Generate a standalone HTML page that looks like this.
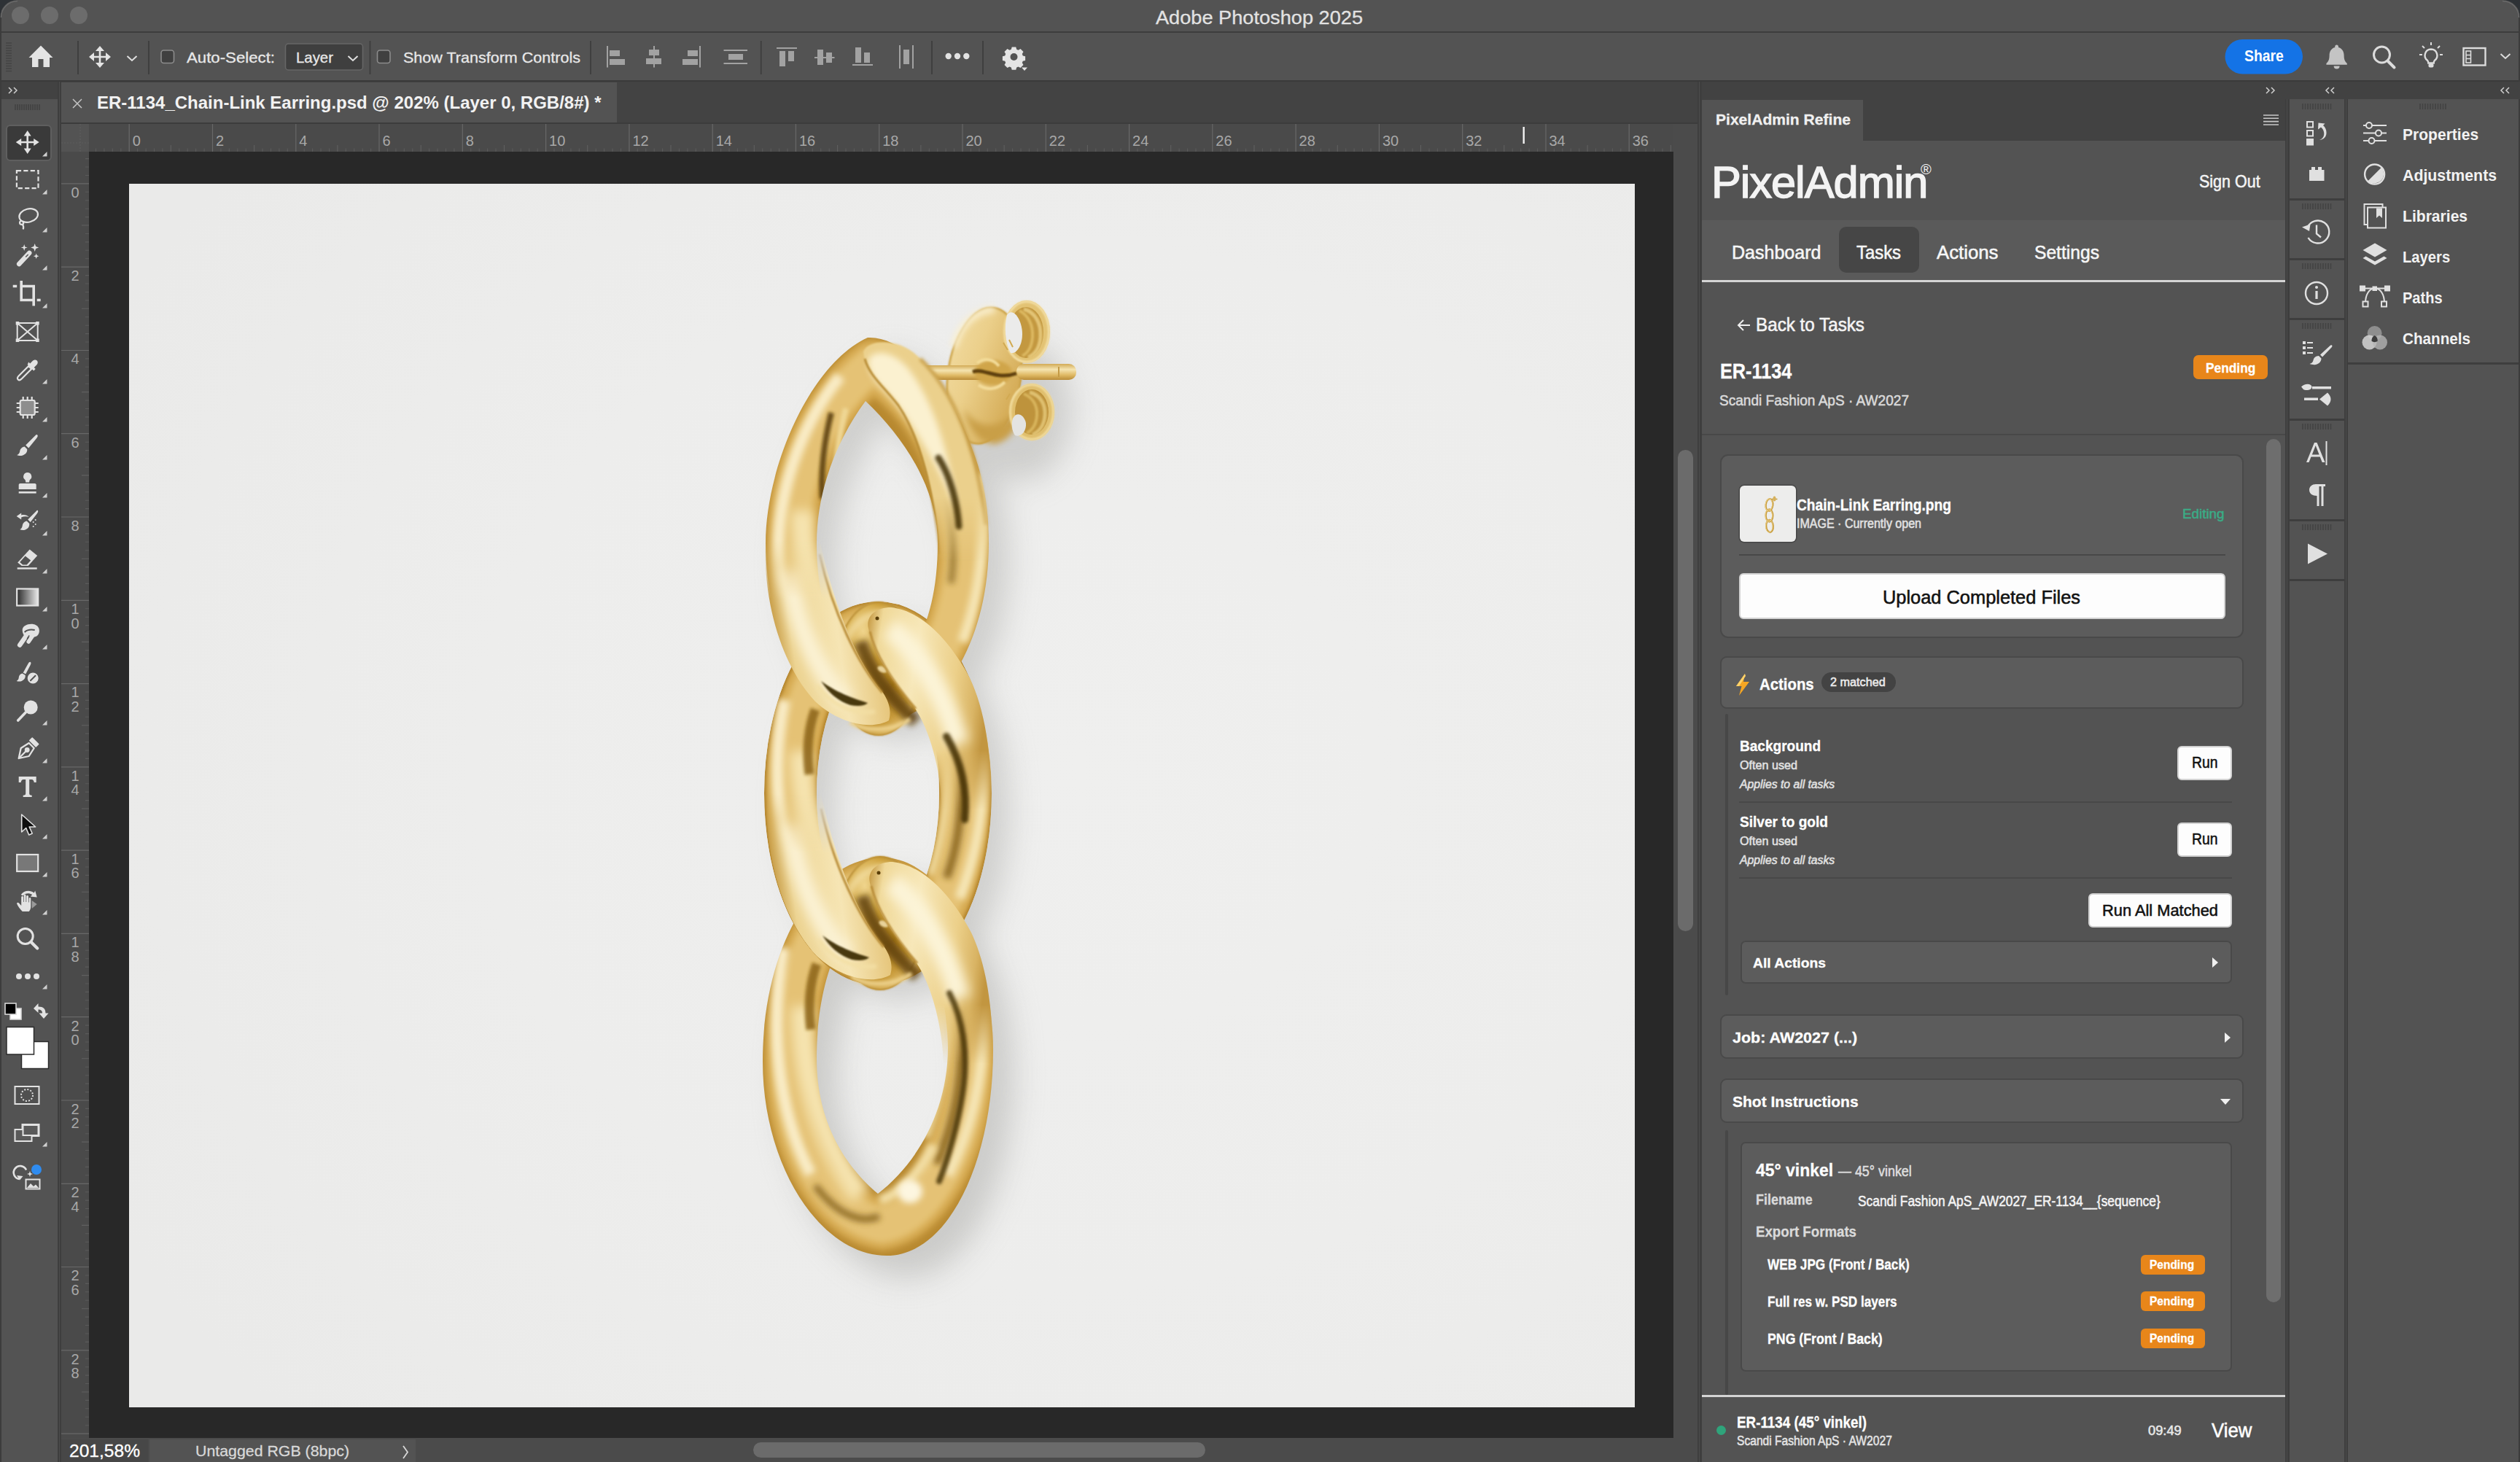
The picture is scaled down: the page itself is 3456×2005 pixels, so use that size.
<!DOCTYPE html>
<html><head><meta charset="utf-8"><title>Adobe Photoshop 2025</title>
<style>
*{box-sizing:border-box;margin:0;padding:0}
html,body{width:3456px;height:2005px;overflow:hidden;background:#535353;font-family:"Liberation Sans",sans-serif;color:#e6e6e6}
.a{position:absolute}
.t{position:absolute;white-space:nowrap;transform-origin:0 50%;line-height:1.2}
.b{font-weight:bold}
.i{font-style:italic}
svg{position:absolute;overflow:visible}
</style></head><body>
<!-- ===== window chrome / base regions ===== -->
<div class="a" style="left:0;top:0;width:3456px;height:2005px;background:#535353"></div>
<!-- title bar bottom line -->
<div class="a" style="left:0;top:43px;width:3456px;height:2px;background:#3d3d3d"></div>
<!-- options bar bottom line -->
<div class="a" style="left:0;top:110px;width:3456px;height:2px;background:#3a3a3a"></div>
<!-- window side borders -->
<div class="a" style="left:0;top:0;width:2px;height:2005px;background:#3c3c3c"></div>
<div class="a" style="left:3454px;top:0;width:2px;height:2005px;background:#3c3c3c"></div>
<!-- rounded corners (outside) -->
<svg style="left:0;top:0" width="24" height="24"><path d="M0 0H24A24 24 0 0 0 0 24Z" fill="#2e3236"/><path d="M1.5 24A22.5 22.5 0 0 1 24 1.5" stroke="#6a6a6a" stroke-width="1.5" fill="none"/></svg>
<svg style="left:3432px;top:0" width="24" height="24"><path d="M24 0H0A24 24 0 0 1 24 24Z" fill="#2e3236"/><path d="M22.5 24A22.5 22.5 0 0 0 0 1.5" stroke="#6a6a6a" stroke-width="1.5" fill="none"/></svg>
<!-- traffic lights -->
<div class="a" style="left:16px;top:9px;width:24px;height:24px;border-radius:50%;background:#6c6c6c"></div>
<div class="a" style="left:56px;top:9px;width:24px;height:24px;border-radius:50%;background:#6c6c6c"></div>
<div class="a" style="left:96px;top:9px;width:24px;height:24px;border-radius:50%;background:#6c6c6c"></div>

<!-- ===== left toolbar ===== -->
<div class="a" style="left:2px;top:112px;width:77px;height:24px;background:#424242"></div>
<div class="a" style="left:2px;top:136px;width:77px;height:1869px;background:#535353"></div>
<div class="a" style="left:79px;top:112px;width:5px;height:1893px;background:#3e3e3e"></div>
<div class="a" style="left:81px;top:112px;width:1px;height:1893px;background:#4c4c4c"></div>

<!-- ===== document area ===== -->
<!-- tab bar -->
<div class="a" style="left:84px;top:112px;width:2244px;height:58px;background:#434343"></div>
<div class="a" style="left:84px;top:113px;width:762px;height:56px;background:#535353"></div>
<div class="a" style="left:84px;top:168px;width:2244px;height:2px;background:#3c3c3c"></div>
<!-- rulers -->
<div class="a" style="left:84px;top:170px;width:2211px;height:38px;background:#4a4a4a"></div>
<div class="a" style="left:84px;top:170px;width:38px;height:1802px;background:#4a4a4a"></div>
<div class="a" style="left:84px;top:170px;width:38px;height:38px;background:#535353"></div>
<!-- canvas -->
<div class="a" style="left:122px;top:208px;width:2173px;height:1764px;background:#282828"></div>
<!-- v scrollbar track -->
<div class="a" style="left:2295px;top:170px;width:33px;height:1835px;background:#4b4b4b"></div>
<div class="a" style="left:2301px;top:617px;width:21px;height:660px;border-radius:11px;background:#6b6b6b"></div>
<!-- status bar -->
<div class="a" style="left:84px;top:1972px;width:2211px;height:33px;background:#4b4b4b"></div>
<div class="a" style="left:84px;top:1974px;width:119px;height:31px;background:#474747"></div>
<div class="a" style="left:205px;top:1974px;width:365px;height:31px;background:#535353"></div>
<div class="a" style="left:1033px;top:1978px;width:620px;height:21px;border-radius:11px;background:#6b6b6b"></div>
<!-- doc/panel separator -->
<div class="a" style="left:2328px;top:112px;width:6px;height:1893px;background:#3e3e3e"></div>
<div class="a" style="left:2330px;top:112px;width:1px;height:1893px;background:#4c4c4c"></div>

<!-- ===== PixelAdmin panel base ===== -->
<div class="a" style="left:2334px;top:112px;width:1122px;height:24px;background:#424242"></div>
<div class="a" style="left:2334px;top:136px;width:800px;height:57px;background:#424242"></div>
<div class="a" style="left:2334px;top:137px;width:221px;height:56px;background:#535353"></div>
<div class="a" style="left:2334px;top:193px;width:800px;height:1812px;background:#535353"></div>
<!-- nav -->
<div class="a" style="left:2334px;top:302px;width:800px;height:83px;background:#5a5a5a"></div>
<div class="a" style="left:2334px;top:384px;width:800px;height:3px;background:#d4d4d4"></div>
<div class="a" style="left:2522px;top:311px;width:110px;height:63px;border-radius:10px;background:#464646"></div>
<!-- header divider -->
<div class="a" style="left:2334px;top:595px;width:800px;height:2px;background:#484848"></div>
<!-- inner scrollbar -->
<div class="a" style="left:3108px;top:602px;width:20px;height:1184px;border-radius:10px;background:#6e6e6e"></div>
<!-- footer -->
<div class="a" style="left:2334px;top:1913px;width:800px;height:3px;background:#d4d4d4"></div>

<!-- separators right -->
<div class="a" style="left:3134px;top:136px;width:6px;height:1869px;background:#3e3e3e"></div>
<div class="a" style="left:3136px;top:136px;width:1px;height:1869px;background:#4c4c4c"></div>
<div class="a" style="left:3215px;top:136px;width:5px;height:1869px;background:#3e3e3e"></div>
<div class="a" style="left:3217px;top:136px;width:1px;height:1869px;background:#4c4c4c"></div>
<!-- icon column group separators -->
<div class="a" style="left:3140px;top:272px;width:75px;height:3px;background:#3e3e3e"></div>
<div class="a" style="left:3140px;top:354px;width:75px;height:3px;background:#3e3e3e"></div>
<div class="a" style="left:3140px;top:436px;width:75px;height:3px;background:#3e3e3e"></div>
<div class="a" style="left:3140px;top:574px;width:75px;height:3px;background:#3e3e3e"></div>
<div class="a" style="left:3140px;top:712px;width:75px;height:3px;background:#3e3e3e"></div>
<div class="a" style="left:3140px;top:794px;width:75px;height:3px;background:#3e3e3e"></div>
<!-- right panel bottom -->
<div class="a" style="left:3220px;top:497px;width:234px;height:3px;background:#3e3e3e"></div>
<!-- ===== options bar ===== -->
<svg style="left:0;top:44px" width="3456" height="66" viewBox="0 44 3456 66">
<!-- gripper -->
<path d="M8 59h8M8 62.5h8M8 66h8M8 69.500h8M8 73h8M8 76.500h8M8 80h8M8 83.500h8M8 87h8M8 90.500h8M8 94h8M8 97.500h8" stroke="#444" stroke-width="1.6"/>
<!-- home -->
<path d="M56 62.500L39.500 79H44V92H52.500V81H59.500V92H68V79H72.500Z" fill="#e4e4e4"/>
<!-- separators -->
<path d="M107 56V102M204 56V102M507.500 56V102M810 56V102M1043.700 56V102M1278 56V102M1348 56V102" stroke="#3f3f3f" stroke-width="2"/>
<!-- move tool icon -->
<g fill="#e4e4e4"><path d="M137 63l6 7h-4.700v6.700h6.700V72l7 6-7 6v-4.700h-6.700v6.700H143l-6 7-6-7h4.700v-6.700h-6.700V84l-7-6 7-6v4.700h6.700V70H131z"/></g>
<path d="M174.500 77l6.500 6 6.500-6" stroke="#e0e0e0" stroke-width="2" fill="none"/>
<!-- checkboxes -->
<rect x="221" y="69" width="17.500" height="17.500" rx="3.500" fill="#404040" stroke="#8c8c8c" stroke-width="1.600"/>
<rect x="517.500" y="69" width="17.500" height="17.500" rx="3.500" fill="#404040" stroke="#8c8c8c" stroke-width="1.600"/>
<!-- Layer dropdown -->
<rect x="391.500" y="60" width="106" height="36" rx="4" fill="#3f3f3f" stroke="#676767" stroke-width="1.500"/>
<path d="M477.500 77l6.500 6 6.500-6" stroke="#e0e0e0" stroke-width="2" fill="none"/>
<!-- align icons (dimmed) -->
<g fill="#a2a2a2" stroke="none">
 <rect x="832" y="63" width="2" height="29.500"/><rect x="836" y="69" width="14" height="8"/><rect x="836" y="81" width="21" height="8"/>
 <rect x="896" y="63" width="2" height="29.500"/><rect x="890" y="68" width="14" height="8"/><rect x="886" y="80" width="21" height="8"/>
 <rect x="959" y="63" width="2" height="29.500"/><rect x="943" y="69" width="14" height="8"/><rect x="936" y="81" width="21" height="8"/>
 <rect x="992.500" y="68" width="32.500" height="2"/><rect x="992.500" y="86" width="32.500" height="2"/><rect x="999" y="74" width="20" height="8"/>
 <rect x="1065" y="65" width="28" height="2"/><rect x="1069" y="70" width="8" height="21"/><rect x="1081" y="70" width="8" height="14"/>
 <rect x="1117" y="78" width="27.500" height="2"/><rect x="1121" y="68" width="8" height="21"/><rect x="1133" y="72" width="8" height="14"/>
 <rect x="1169" y="88" width="28" height="2"/><rect x="1173" y="65" width="8" height="21"/><rect x="1185" y="72" width="8" height="14"/>
 <rect x="1233" y="62" width="2" height="32"/><rect x="1251" y="62" width="2" height="32"/><rect x="1239" y="68" width="8" height="20"/>
</g>
<!-- ... -->
<circle cx="1300.700" cy="77" r="4.200" fill="#e2e2e2"/><circle cx="1313" cy="77" r="4.200" fill="#e2e2e2"/><circle cx="1325.300" cy="77" r="4.200" fill="#e2e2e2"/>
<!-- gear -->
<g transform="translate(1390.500 78)" fill="#e4e4e4">
 <path d="M-2.800-13.500h5.600l.9 3.300 2.300 1 3-1.700 4 4-1.700 3 1 2.300 3.300.9v5.600l-3.300.9-1 2.300 1.700 3-4 4-3-1.700-2.300 1-.9 3.300h-5.600l-.9-3.300-2.300-1-3 1.700-4-4 1.700-3-1-2.300-3.300-.9v-5.600l3.300-.9 1-2.300-1.700-3 4-4 3 1.700 2.300-1z" transform="translate(0 0)"/>
 <circle cx="0" cy="0" r="5" fill="#535353"/>
</g>
<path d="M1401 92.500h8l-4 4.500z" fill="#e4e4e4"/>
<!-- share button -->
<rect x="3051.500" y="54" width="106.500" height="47.500" rx="23.750" fill="#1473e6"/>
<!-- bell -->
<g fill="#c4c4c4">
 <path d="M3204.600 61.500c1.400 0 2.400 1 2.400 2.400v1c5 1.300 7.600 5.600 7.600 11.100 0 6 1.500 8.600 4.200 11v1.800h-28.400v-1.800c2.700-2.400 4.200-5 4.200-11 0-5.500 2.600-9.800 7.600-11.100v-1c0-1.400 1-2.400 2.400-2.400z"/>
 <path d="M3200.600 90.500h8a4 4 0 0 1-8 0z"/>
</g>
<!-- search -->
<circle cx="3266.500" cy="75" r="11" fill="none" stroke="#dcdcdc" stroke-width="3"/><path d="M3274.500 83.500l9 9" stroke="#dcdcdc" stroke-width="4" stroke-linecap="round"/>
<!-- bulb -->
<g stroke="#dcdcdc" fill="none" stroke-width="2.400">
 <path d="M3334 67.500a8.500 8.500 0 0 1 5 15.300c-1 1-1.300 2-1.300 3.700h-7.400c0-1.700-.3-2.700-1.300-3.700a8.500 8.500 0 0 1 5-15.300z"/>
 <path d="M3334 58v4M3322 63l3 3M3346 63l-3 3M3318 75h4M3346 75h4" stroke-width="2"/>
</g>
<rect x="3330.500" y="87" width="7" height="5.500" rx="2" fill="#dcdcdc"/>
<!-- workspace -->
<rect x="3378.500" y="66" width="30" height="23.500" fill="none" stroke="#dcdcdc" stroke-width="2.400"/>
<rect x="3382" y="70" width="6.500" height="16" fill="none" stroke="#dcdcdc" stroke-width="1.600"/><path d="M3382 75.500h6.500M3382 80.500h6.500" stroke="#dcdcdc" stroke-width="1.400"/>
<path d="M3429.500 74l6.500 6 6.500-6" stroke="#dcdcdc" stroke-width="2" fill="none"/>
</svg>
<!-- tab close x -->
<svg style="left:99px;top:135px" width="14" height="14" viewBox="0 0 14 14"><path d="M1 1l12 12M13 1L1 13" stroke="#c4c4c4" stroke-width="1.500"/></svg>
<!-- status chevron -->
<svg style="left:551px;top:1982px" width="10" height="19" viewBox="0 0 10 19"><path d="M2 1l6 8.500L2 18" stroke="#d8d8d8" stroke-width="1.800" fill="none"/></svg>
<!-- ===== rulers ===== -->
<svg style="left:0;top:0" width="3456" height="2005" viewBox="0 0 3456 2005">
<path d="M177.2 170V208M291.5 170V208M405.8 170V208M520.0 170V208M634.3 170V208M748.6 170V208M862.9 170V208M977.2 170V208M1091.4 170V208M1205.7 170V208M1320.0 170V208M1434.3 170V208M1548.6 170V208M1662.8 170V208M1777.1 170V208M1891.4 170V208M2005.7 170V208M2120.0 170V208M2234.2 170V208" stroke="#686868" stroke-width="1.2" fill="none"/>
<path d="M234.3 199V208M348.6 199V208M462.9 199V208M577.2 199V208M691.5 199V208M805.7 199V208M920.0 199V208M1034.3 199V208M1148.6 199V208M1262.9 199V208M1377.1 199V208M1491.4 199V208M1605.7 199V208M1720.0 199V208M1834.3 199V208M1948.5 199V208M2062.8 199V208M2177.1 199V208M2291.4 199V208" stroke="#606060" stroke-width="1.1" fill="none"/>
<path d="M131.5 203.5V208M142.9 203.5V208M154.3 203.5V208M165.8 203.5V208M188.6 203.5V208M200.1 203.5V208M211.5 203.5V208M222.9 203.5V208M245.8 203.5V208M257.2 203.5V208M268.6 203.5V208M280.1 203.5V208M302.9 203.5V208M314.3 203.5V208M325.8 203.5V208M337.2 203.5V208M360.0 203.5V208M371.5 203.5V208M382.9 203.5V208M394.3 203.5V208M417.2 203.5V208M428.6 203.5V208M440.0 203.5V208M451.5 203.5V208M474.3 203.5V208M485.8 203.5V208M497.2 203.5V208M508.6 203.5V208M531.5 203.5V208M542.9 203.5V208M554.3 203.5V208M565.8 203.5V208M588.6 203.5V208M600.0 203.5V208M611.5 203.5V208M622.9 203.5V208M645.7 203.5V208M657.2 203.5V208M668.6 203.5V208M680.0 203.5V208M702.9 203.5V208M714.3 203.5V208M725.7 203.5V208M737.2 203.5V208M760.0 203.5V208M771.5 203.5V208M782.9 203.5V208M794.3 203.5V208M817.2 203.5V208M828.6 203.5V208M840.0 203.5V208M851.5 203.5V208M874.3 203.5V208M885.7 203.5V208M897.2 203.5V208M908.6 203.5V208M931.4 203.5V208M942.9 203.5V208M954.3 203.5V208M965.7 203.5V208M988.6 203.5V208M1000.0 203.5V208M1011.4 203.5V208M1022.9 203.5V208M1045.7 203.5V208M1057.2 203.5V208M1068.6 203.5V208M1080.0 203.5V208M1102.9 203.5V208M1114.3 203.5V208M1125.7 203.5V208M1137.2 203.5V208M1160.0 203.5V208M1171.4 203.5V208M1182.9 203.5V208M1194.3 203.5V208M1217.1 203.5V208M1228.6 203.5V208M1240.0 203.5V208M1251.4 203.5V208M1274.3 203.5V208M1285.7 203.5V208M1297.1 203.5V208M1308.6 203.5V208M1331.4 203.5V208M1342.9 203.5V208M1354.3 203.5V208M1365.7 203.5V208M1388.6 203.5V208M1400.0 203.5V208M1411.4 203.5V208M1422.9 203.5V208M1445.7 203.5V208M1457.1 203.5V208M1468.6 203.5V208M1480.0 203.5V208M1502.8 203.5V208M1514.3 203.5V208M1525.7 203.5V208M1537.1 203.5V208M1560.0 203.5V208M1571.4 203.5V208M1582.8 203.5V208M1594.3 203.5V208M1617.1 203.5V208M1628.6 203.5V208M1640.0 203.5V208M1651.4 203.5V208M1674.3 203.5V208M1685.7 203.5V208M1697.1 203.5V208M1708.6 203.5V208M1731.4 203.5V208M1742.8 203.5V208M1754.3 203.5V208M1765.7 203.5V208M1788.5 203.5V208M1800.0 203.5V208M1811.4 203.5V208M1822.8 203.5V208M1845.7 203.5V208M1857.1 203.5V208M1868.5 203.5V208M1880.0 203.5V208M1902.8 203.5V208M1914.3 203.5V208M1925.7 203.5V208M1937.1 203.5V208M1960.0 203.5V208M1971.4 203.5V208M1982.8 203.5V208M1994.3 203.5V208M2017.1 203.5V208M2028.5 203.5V208M2040.0 203.5V208M2051.4 203.5V208M2074.2 203.5V208M2085.7 203.5V208M2097.1 203.5V208M2108.5 203.5V208M2131.4 203.5V208M2142.8 203.5V208M2154.2 203.5V208M2165.7 203.5V208M2188.5 203.5V208M2200.0 203.5V208M2211.4 203.5V208M2222.8 203.5V208M2245.7 203.5V208M2257.1 203.5V208M2268.5 203.5V208M2280.0 203.5V208" stroke="#5b5b5b" stroke-width="1.1" fill="none"/>
<path d="M84 251.9H122M84 366.2H122M84 480.5H122M84 594.7H122M84 709.0H122M84 823.3H122M84 937.6H122M84 1051.9H122M84 1166.1H122M84 1280.4H122M84 1394.7H122M84 1509.0H122M84 1623.3H122M84 1737.5H122M84 1851.8H122M84 1966.1H122" stroke="#686868" stroke-width="1.2" fill="none"/>
<path d="M112 309.0H122M112 423.3H122M112 537.6H122M112 651.9H122M112 766.2H122M112 880.4H122M112 994.7H122M112 1109.0H122M112 1223.3H122M112 1337.6H122M112 1451.8H122M112 1566.1H122M112 1680.4H122M112 1794.7H122M112 1909.0H122" stroke="#606060" stroke-width="1.1" fill="none"/>
<path d="M117 217.6H122M117 229.0H122M117 240.5H122M117 263.3H122M117 274.8H122M117 286.2H122M117 297.6H122M117 320.5H122M117 331.9H122M117 343.3H122M117 354.8H122M117 377.6H122M117 389.0H122M117 400.5H122M117 411.9H122M117 434.7H122M117 446.2H122M117 457.6H122M117 469.0H122M117 491.9H122M117 503.3H122M117 514.7H122M117 526.2H122M117 549.0H122M117 560.5H122M117 571.9H122M117 583.3H122M117 606.2H122M117 617.6H122M117 629.0H122M117 640.5H122M117 663.3H122M117 674.7H122M117 686.2H122M117 697.6H122M117 720.4H122M117 731.9H122M117 743.3H122M117 754.7H122M117 777.6H122M117 789.0H122M117 800.4H122M117 811.9H122M117 834.7H122M117 846.2H122M117 857.6H122M117 869.0H122M117 891.9H122M117 903.3H122M117 914.7H122M117 926.2H122M117 949.0H122M117 960.4H122M117 971.9H122M117 983.3H122M117 1006.1H122M117 1017.6H122M117 1029.0H122M117 1040.4H122M117 1063.3H122M117 1074.7H122M117 1086.1H122M117 1097.6H122M117 1120.4H122M117 1131.9H122M117 1143.3H122M117 1154.7H122M117 1177.6H122M117 1189.0H122M117 1200.4H122M117 1211.9H122M117 1234.7H122M117 1246.1H122M117 1257.6H122M117 1269.0H122M117 1291.8H122M117 1303.3H122M117 1314.7H122M117 1326.1H122M117 1349.0H122M117 1360.4H122M117 1371.8H122M117 1383.3H122M117 1406.1H122M117 1417.6H122M117 1429.0H122M117 1440.4H122M117 1463.3H122M117 1474.7H122M117 1486.1H122M117 1497.6H122M117 1520.4H122M117 1531.8H122M117 1543.3H122M117 1554.7H122M117 1577.5H122M117 1589.0H122M117 1600.4H122M117 1611.8H122M117 1634.7H122M117 1646.1H122M117 1657.5H122M117 1669.0H122M117 1691.8H122M117 1703.3H122M117 1714.7H122M117 1726.1H122M117 1749.0H122M117 1760.4H122M117 1771.8H122M117 1783.3H122M117 1806.1H122M117 1817.5H122M117 1829.0H122M117 1840.4H122M117 1863.2H122M117 1874.7H122M117 1886.1H122M117 1897.5H122M117 1920.4H122M117 1931.8H122M117 1943.2H122M117 1954.7H122" stroke="#5b5b5b" stroke-width="1.1" fill="none"/>
<path d="M84 196H122M110 170V208" stroke="#5e5e5e" stroke-width="1.2" stroke-dasharray="2 2" fill="none"/>
<rect x="2088.5" y="174" width="2.4" height="23" fill="#f2f2f2"/>
</svg>
<div class="t" style="left:181.7px;top:180.5px;font-size:20px;line-height:24px;color:#a8a8a8">0</div>
<div class="t" style="left:296.0px;top:180.5px;font-size:20px;line-height:24px;color:#a8a8a8">2</div>
<div class="t" style="left:410.3px;top:180.5px;font-size:20px;line-height:24px;color:#a8a8a8">4</div>
<div class="t" style="left:524.5px;top:180.5px;font-size:20px;line-height:24px;color:#a8a8a8">6</div>
<div class="t" style="left:638.8px;top:180.5px;font-size:20px;line-height:24px;color:#a8a8a8">8</div>
<div class="t" style="left:753.1px;top:180.5px;font-size:20px;line-height:24px;color:#a8a8a8">10</div>
<div class="t" style="left:867.4px;top:180.5px;font-size:20px;line-height:24px;color:#a8a8a8">12</div>
<div class="t" style="left:981.7px;top:180.5px;font-size:20px;line-height:24px;color:#a8a8a8">14</div>
<div class="t" style="left:1095.9px;top:180.5px;font-size:20px;line-height:24px;color:#a8a8a8">16</div>
<div class="t" style="left:1210.2px;top:180.5px;font-size:20px;line-height:24px;color:#a8a8a8">18</div>
<div class="t" style="left:1324.5px;top:180.5px;font-size:20px;line-height:24px;color:#a8a8a8">20</div>
<div class="t" style="left:1438.8px;top:180.5px;font-size:20px;line-height:24px;color:#a8a8a8">22</div>
<div class="t" style="left:1553.1px;top:180.5px;font-size:20px;line-height:24px;color:#a8a8a8">24</div>
<div class="t" style="left:1667.3px;top:180.5px;font-size:20px;line-height:24px;color:#a8a8a8">26</div>
<div class="t" style="left:1781.6px;top:180.5px;font-size:20px;line-height:24px;color:#a8a8a8">28</div>
<div class="t" style="left:1895.9px;top:180.5px;font-size:20px;line-height:24px;color:#a8a8a8">30</div>
<div class="t" style="left:2010.2px;top:180.5px;font-size:20px;line-height:24px;color:#a8a8a8">32</div>
<div class="t" style="left:2124.5px;top:180.5px;font-size:20px;line-height:24px;color:#a8a8a8">34</div>
<div class="t" style="left:2238.7px;top:180.5px;font-size:20px;line-height:24px;color:#a8a8a8">36</div>
<div class="t" style="left:97.5px;top:251.7px;font-size:20px;line-height:24px;color:#a8a8a8">0</div>
<div class="t" style="left:97.5px;top:366.0px;font-size:20px;line-height:24px;color:#a8a8a8">2</div>
<div class="t" style="left:97.5px;top:480.3px;font-size:20px;line-height:24px;color:#a8a8a8">4</div>
<div class="t" style="left:97.5px;top:594.5px;font-size:20px;line-height:24px;color:#a8a8a8">6</div>
<div class="t" style="left:97.5px;top:708.8px;font-size:20px;line-height:24px;color:#a8a8a8">8</div>
<div class="t" style="left:97.5px;top:823.1px;font-size:20px;line-height:24px;color:#a8a8a8">1</div>
<div class="t" style="left:97.5px;top:842.6px;font-size:20px;line-height:24px;color:#a8a8a8">0</div>
<div class="t" style="left:97.5px;top:937.4px;font-size:20px;line-height:24px;color:#a8a8a8">1</div>
<div class="t" style="left:97.5px;top:956.9px;font-size:20px;line-height:24px;color:#a8a8a8">2</div>
<div class="t" style="left:97.5px;top:1051.7px;font-size:20px;line-height:24px;color:#a8a8a8">1</div>
<div class="t" style="left:97.5px;top:1071.2px;font-size:20px;line-height:24px;color:#a8a8a8">4</div>
<div class="t" style="left:97.5px;top:1165.9px;font-size:20px;line-height:24px;color:#a8a8a8">1</div>
<div class="t" style="left:97.5px;top:1185.4px;font-size:20px;line-height:24px;color:#a8a8a8">6</div>
<div class="t" style="left:97.5px;top:1280.2px;font-size:20px;line-height:24px;color:#a8a8a8">1</div>
<div class="t" style="left:97.5px;top:1299.7px;font-size:20px;line-height:24px;color:#a8a8a8">8</div>
<div class="t" style="left:97.5px;top:1394.5px;font-size:20px;line-height:24px;color:#a8a8a8">2</div>
<div class="t" style="left:97.5px;top:1414.0px;font-size:20px;line-height:24px;color:#a8a8a8">0</div>
<div class="t" style="left:97.5px;top:1508.8px;font-size:20px;line-height:24px;color:#a8a8a8">2</div>
<div class="t" style="left:97.5px;top:1528.3px;font-size:20px;line-height:24px;color:#a8a8a8">2</div>
<div class="t" style="left:97.5px;top:1623.1px;font-size:20px;line-height:24px;color:#a8a8a8">2</div>
<div class="t" style="left:97.5px;top:1642.6px;font-size:20px;line-height:24px;color:#a8a8a8">4</div>
<div class="t" style="left:97.5px;top:1737.3px;font-size:20px;line-height:24px;color:#a8a8a8">2</div>
<div class="t" style="left:97.5px;top:1756.8px;font-size:20px;line-height:24px;color:#a8a8a8">6</div>
<div class="t" style="left:97.5px;top:1851.6px;font-size:20px;line-height:24px;color:#a8a8a8">2</div>
<div class="t" style="left:97.5px;top:1871.1px;font-size:20px;line-height:24px;color:#a8a8a8">8</div>
<!-- ===== left toolbar icons ===== -->
<div class="a" style="left:7.5px;top:170.5px;width:63.5px;height:50px;border-radius:6px;background:#3a3a3a;border:2px solid #5f5f5f"></div>
<svg style="left:0;top:0" width="84" height="2005" viewBox="0 0 84 2005">
<path d="M21 143v8M24 143v8M27 143v8M30 143v8M33 143v8M36 143v8M39 143v8M42 143v8M45 143v8M48 143v8M51 143v8M54 143v8" stroke="#434343" stroke-width="1.600"/>
<g transform="translate(21.700 179)"><path d="M16 4V28M4 16H28" stroke="#e2e2e2" stroke-width="2.600" fill="none"/><path d="M16 0l5 7.500H11zM16 32l5-7.500H11zM0 16l7.500-5v10zM32 16l-7.500-5v10z" fill="#e2e2e2"/></g>
<path d="M64.500 208v6.500h-6.500z" fill="#cfcfcf"/>
<g transform="translate(21.700 231)"><rect x="1.200" y="3.200" width="29.600" height="24" fill="none" stroke="#e2e2e2" stroke-width="2.200" stroke-dasharray="6.200 3.200"/></g>
<path d="M64.500 260v6.500h-6.500z" fill="#cfcfcf"/>
<g transform="translate(21.700 283)"><g fill="none" stroke="#e2e2e2" stroke-width="2.200"><ellipse cx="17.500" cy="12.500" rx="13" ry="9" transform="rotate(-14 17.500 12.500)"/><path d="M8 19.500c-3.500 1-3.500 5 0 5.300 3 .2 3.500-3.500 .5-4.500M9 24.500c1.500 2 2 4 1 7"/></g></g>
<path d="M64.500 312v6.500h-6.500z" fill="#cfcfcf"/>
<g transform="translate(21.700 335)"><path d="M4.500 27L18.500 12" stroke="#e2e2e2" stroke-width="6.500" stroke-linecap="round"/><path d="M13.500 17.500l3.500-3.500" stroke="#535353" stroke-width="1.400"/><g fill="#e2e2e2"><path d="M11.500 0l1.100 3.400 3.400 1.100-3.400 1.100-1.100 3.400-1.100-3.400L7 4.500l3.400-1.100zM26 -1l1.400 4.100 4.100 1.400-4.100 1.400L26 10l-1.400-4.100-4.100-1.400 4.100-1.400zM28 12.500l1 2.800 2.800 1-2.800 1-1 2.800-1-2.800-2.800-1 2.800-1z"/></g></g>
<path d="M64.500 364v6.500h-6.500z" fill="#cfcfcf"/>
<g transform="translate(21.700 387)"><g fill="none" stroke="#e2e2e2" stroke-width="3.600"><path d="M7.500 -2V24.500H24"/><path d="M7.500 5.500H24.500V32.500"/><path d="M-4 5.500H1.500M29 24.500H34"/></g></g>
<path d="M64.500 416v6.500h-6.500z" fill="#cfcfcf"/>
<g transform="translate(21.700 439)"><g fill="none" stroke="#e2e2e2" stroke-width="2"><rect x="2" y="4" width="28" height="24"/><path d="M2 4L30 28M30 4L2 28"/></g><g fill="#e2e2e2"><rect x="0" y="2" width="4.500" height="4.500"/><rect x="27.500" y="2" width="4.500" height="4.500"/><rect x="0" y="25.500" width="4.500" height="4.500"/><rect x="27.500" y="25.500" width="4.500" height="4.500"/></g></g>
<g transform="translate(21.700 491)"><g><path d="M3 29.500c-1.500-1.500-.5-3.500 1-5L17.500 11l4 4L8 28.500c-1.500 1.500-3.500 2.500-5 1z" fill="none" stroke="#e2e2e2" stroke-width="2.200"/><path d="M16 8l8.500 8.500 2.500-2.500-2-2 3.500-3.500c2-2 2-4.500 .5-6s-4-1.500-6 .5L19.500 6.500l-2-2z" fill="#e2e2e2" transform="translate(0 1)"/></g></g>
<path d="M64.500 520v6.500h-6.500z" fill="#cfcfcf"/>
<g transform="translate(21.700 543)"><rect x="6" y="6" width="20" height="20" rx="2" fill="#8e8e8e" stroke="#e2e2e2" stroke-width="2.200"/><path d="M10 1v5M16 1v5M22 1v5M10 26v5M16 26v5M22 26v5M1 10h5M1 16h5M1 22h5M26 10h5M26 16h5M26 22h5" stroke="#e2e2e2" stroke-width="2.200"/></g>
<path d="M64.500 572v6.500h-6.500z" fill="#cfcfcf"/>
<g transform="translate(21.700 595)"><g fill="#e2e2e2"><path d="M29.500 1.500c1 1 .5 2.500-1 4.500L17.500 19.500l-4-4L26 3c1.500-1.500 2.500-2.500 3.500-1.500z"/><path d="M12 17.500l3.500 3.500c.5 4-2 7-6 8.500-3 1-6 .5-8-.5 2.500-1 3.500-2.500 4-5 .5-3.500 3-6 6.500-6.500z"/></g></g>
<path d="M64.500 624v6.500h-6.500z" fill="#cfcfcf"/>
<g transform="translate(21.700 647)"><g fill="#e2e2e2"><path d="M16 1a5.500 5.500 0 0 1 3.500 9.800c-.8.800-1 2-1 3.700h-5c0-1.700-.2-2.900-1-3.700A5.500 5.500 0 0 1 16 1z"/><path d="M6 16h20c1.500 0 2 1 2 2v6H4v-6c0-1 .5-2 2-2z"/><rect x="4" y="27" width="24" height="2.600"/></g></g>
<path d="M64.500 676v6.500h-6.500z" fill="#cfcfcf"/>
<g transform="translate(21.700 699)"><g fill="#e2e2e2"><path d="M30 1c1 1 .5 2.500-1 4.500L20 17l-3.500-3.500L27 3c1.500-1.500 2-3 3-2z"/><path d="M15 15.500l3.500 3.500c.5 4-1.500 7-5.500 8.500-3 1-5.500 .5-7.500-.5 2.500-1 3-2.500 3.500-5 .5-3.500 2.500-6 6-6.500z"/><path d="M1 9l6.500-4.500v3c4-1 8 0 10.500 2.500-3.500-1-7-.8-10.500 .5v3z"/></g><g fill="#e2e2e2"><circle cx="24" cy="17" r="1"/><circle cx="27" cy="20" r="1"/><circle cx="24" cy="23" r="1"/><circle cx="27" cy="14" r="1"/></g></g>
<path d="M64.500 728v6.500h-6.500z" fill="#cfcfcf"/>
<g transform="translate(21.700 751)"><g><path d="M19 2.500l10.500 8.500L17 25H8L2.500 20.500z" fill="#e2e2e2"/><path d="M5.500 20L13 11.500l7.500 6L15 23.500H9.500z" fill="#535353"/><path d="M2 28.500h27" stroke="#e2e2e2" stroke-width="2.400"/></g></g>
<path d="M64.500 780v6.500h-6.500z" fill="#cfcfcf"/>
<g transform="translate(21.700 803)"><defs><linearGradient id="tg" x1="0" x2="1" y1="0" y2="0"><stop offset="0" stop-color="#2a2a2a"/><stop offset="1" stop-color="#e8e8e8"/></linearGradient></defs><rect x="1.500" y="4.500" width="29" height="23" fill="url(#tg)" stroke="#e2e2e2" stroke-width="2.200"/></g>
<path d="M64.500 832v6.500h-6.500z" fill="#cfcfcf"/>
<g transform="translate(21.700 855)"><path d="M9 9C9 3 17 0 24 1C30 2 33 7 32 12C31 17 27 19 22 19H16C12 19 9 14 9 9Z" fill="#e2e2e2"/><path d="M15 16L5.500 29.500" stroke="#e2e2e2" stroke-width="6.500" stroke-linecap="round"/><path d="M23 17l-5.500 8" stroke="#e2e2e2" stroke-width="5.500" stroke-linecap="round"/><path d="M12 12c3-3 8-4 14-3" stroke="#535353" stroke-width="2" fill="none"/><path d="M18.500 16.500l-3 4.500" stroke="#535353" stroke-width="1.500" fill="none"/></g>
<path d="M64.500 884v6.500h-6.500z" fill="#cfcfcf"/>
<g transform="translate(21.700 907)"><g fill="#e2e2e2"><path d="M20 1c1 .5 1 2 0 4L13.500 17.500l-3.500-2L17 3c1-1.500 2-2.500 3-2z"/><path d="M9 16.500l4 2.500c.5 3.500-1.500 6.500-5 8-2.500 1-5 .5-7 0 2-1.200 2.800-2.500 3-4.500.3-3 2-5.500 5-6z"/></g><circle cx="23.500" cy="23" r="6.500" fill="#e2e2e2"/><path d="M19 27.500l9-9" stroke="#535353" stroke-width="2"/><circle cx="23.500" cy="23" r="6.500" fill="none" stroke="#e2e2e2" stroke-width="2"/></g>
<g transform="translate(21.700 959)"><circle cx="20.500" cy="11" r="9.500" fill="#e2e2e2"/><path d="M13.500 18L3 29" stroke="#e2e2e2" stroke-width="3.600" stroke-linecap="round"/></g>
<path d="M64.500 988v6.500h-6.500z" fill="#cfcfcf"/>
<g transform="translate(21.700 1011)"><g fill="none" stroke="#e2e2e2" stroke-width="2.300" stroke-linejoin="round"><path d="M4 29l3-14 11-7 7 7-7 11z"/><path d="M4.500 28.500L14 19"/><circle cx="15.500" cy="17.500" r="2.300" fill="#e2e2e2"/><path d="M19.500 4.500l8 8 3-3-8-8z" fill="#e2e2e2"/></g></g>
<path d="M64.500 1040v6.500h-6.500z" fill="#cfcfcf"/>
<g transform="translate(21.700 1063)"><path d="M4 2h24v8h-3c-.3-2.500-1.200-3.800-3.500-4h-3v19c0 2 .8 2.600 3.500 2.800V30H10v-2.200c2.700-.2 3.500-.8 3.500-2.800V6h-3C8.200 6.200 7.300 7.500 7 10H4z" fill="#e2e2e2"/></g>
<path d="M64.500 1092v6.500h-6.500z" fill="#cfcfcf"/>
<g transform="translate(21.700 1115)"><path d="M8 2v24l6-5.500 4 9.500 4.500-2-4-9H27z" fill="#0e0e0e" stroke="#e2e2e2" stroke-width="1.600" stroke-linejoin="round"/></g>
<path d="M64.500 1144v6.500h-6.500z" fill="#cfcfcf"/>
<g transform="translate(21.700 1167)"><rect x="1.500" y="5" width="29" height="23" fill="#787878" stroke="#e2e2e2" stroke-width="2.200"/></g>
<path d="M64.500 1196v6.500h-6.500z" fill="#cfcfcf"/>
<g transform="translate(21.700 1219)"><g fill="#e2e2e2"><path d="M9 31c-3-3-6-7-7.500-10.500-.5-1.500 1.500-2.500 2.800-1l3.200 3.500V11.500c0-2 2.800-2 2.800 0V18h.7V9c0-2 2.800-2 2.800 0v9h.7V10.500c0-2 2.800-2 2.800 0V18.500h.7V13.500c0-2 2.600-2 2.600 0V24c0 3-1 5-2.500 7z"/><path d="M22 16l7 5-7 6z" fill="#9a9a9a"/><path d="M7 8c4-5.500 12-7 18-2.500l1.500-3 2.500 9-9-1 2.500-2.500C18 5 12.500 6 9.500 9.500z"/></g></g>
<path d="M64.500 1248v6.500h-6.500z" fill="#cfcfcf"/>
<g transform="translate(21.700 1271)"><circle cx="13" cy="13" r="10.500" fill="none" stroke="#e2e2e2" stroke-width="3"/><path d="M21 21l8.500 8.500" stroke="#e2e2e2" stroke-width="4.200" stroke-linecap="round"/></g>
<circle cx="26" cy="1339" r="4" fill="#e2e2e2"/><circle cx="38" cy="1339" r="4" fill="#e2e2e2"/><circle cx="50" cy="1339" r="4" fill="#e2e2e2"/><path d="M64.500 1350v6.500h-6.500z" fill="#cfcfcf"/>
<rect x="14" y="1383" width="15" height="15" fill="#fff" stroke="#d8d8d8" stroke-width="1.600"/><rect x="7" y="1376" width="15" height="15" fill="#000" stroke="#d8d8d8" stroke-width="1.600"/>
<path d="M46 1383l6.500-7v4.500c7 0 10 3 10 9h4l-6.500 7.500-6.500-7.500h4.500c0-3.500-2-5-5.500-5v4.500z" fill="#e2e2e2"/>
<rect x="29.500" y="1428.500" width="37" height="37" fill="#fff" stroke="#2b2b2b" stroke-width="1.500"/><rect x="9" y="1408.500" width="37.500" height="37.500" fill="#fff" stroke="#2b2b2b" stroke-width="1.500"/>
<rect x="20.500" y="1490" width="33" height="24" fill="#505050" stroke="#e2e2e2" stroke-width="2"/><circle cx="37" cy="1502" r="8" fill="none" stroke="#e2e2e2" stroke-width="2" stroke-dasharray="2 2.200"/>
<rect x="30.500" y="1542" width="23" height="16" fill="#5a5a5a" stroke="#e2e2e2" stroke-width="2"/><rect x="20.500" y="1549" width="23" height="16" fill="#5a5a5a" stroke="#e2e2e2" stroke-width="2"/><rect x="31.500" y="1543" width="21" height="14" fill="#5a5a5a" stroke="#e2e2e2" stroke-width="2"/><path d="M64.500 1566v6.500h-6.500z" fill="#cfcfcf"/>
<path d="M36 1604.500a9 9 0 1 0-9.500 12.500" fill="none" stroke="#e2e2e2" stroke-width="2.600"/><path d="M23 1612l4 6.500 4.500-5.500z" fill="#e2e2e2"/><rect x="35.500" y="1617.500" width="19" height="13" fill="none" stroke="#e2e2e2" stroke-width="2"/><path d="M37 1629l5-6 4 4 3-2.500 4 4.500z" fill="#e2e2e2"/><path d="M41 1606l1 3 3 1-3 1-1 3-1-3-3-1 3-1z" fill="#e2e2e2"/><circle cx="50" cy="1604" r="7" fill="#2f8cf0"/>
</svg>
<!-- ===== right icon column + collapsed panels ===== -->
<svg style="left:3134px;top:130px" width="322" height="700" viewBox="3134 130 322 700">
<!-- grippers -->
<g stroke="#434343" stroke-width="1.600">
<path d="M3158 142v8M3161.500 142v8M3165 142v8M3168.500 142v8M3172 142v8M3175.500 142v8M3179 142v8M3182.500 142v8M3186 142v8M3189.500 142v8M3193 142v8M3196.500 142v8"/>
<path d="M3158 279v8M3161.500 279v8M3165 279v8M3168.500 279v8M3172 279v8M3175.500 279v8M3179 279v8M3182.500 279v8M3186 279v8M3189.500 279v8M3193 279v8M3196.500 279v8"/>
<path d="M3158 361v8M3161.500 361v8M3165 361v8M3168.500 361v8M3172 361v8M3175.500 361v8M3179 361v8M3182.500 361v8M3186 361v8M3189.500 361v8M3193 361v8M3196.500 361v8"/>
<path d="M3158 443v8M3161.500 443v8M3165 443v8M3168.500 443v8M3172 443v8M3175.500 443v8M3179 443v8M3182.500 443v8M3186 443v8M3189.500 443v8M3193 443v8M3196.500 443v8"/>
<path d="M3158 581v8M3161.500 581v8M3165 581v8M3168.500 581v8M3172 581v8M3175.500 581v8M3179 581v8M3182.500 581v8M3186 581v8M3189.500 581v8M3193 581v8M3196.500 581v8"/>
<path d="M3158 719v8M3161.500 719v8M3165 719v8M3168.500 719v8M3172 719v8M3175.500 719v8M3179 719v8M3182.500 719v8M3186 719v8M3189.500 719v8M3193 719v8M3196.500 719v8"/>
<path d="M3319 142v8M3322.500 142v8M3326 142v8M3329.500 142v8M3333 142v8M3336.500 142v8M3340 142v8M3343.500 142v8M3347 142v8M3350.500 142v8M3354 142v8"/>
</g>
<!-- 1: history-states icon (3 squares + curved arrow) center (3177,182) -->
<g fill="none" stroke="#e0e0e0" stroke-width="2">
 <rect x="3164" y="167" width="8" height="7.500"/><rect x="3164" y="179" width="8" height="7.500"/>
</g>
<rect x="3163" y="190" width="10" height="9.500" fill="#e0e0e0"/>
<path d="M3181 187c5-2 7-6 6-11-.5-3-2-5-4-6.500l-4 3 .5-9 9 1-2.500 2.500c3 2.500 4.500 6 4.500 10 0 6-4 9.500-9.500 10z" fill="#e0e0e0" transform="translate(0 5)"/>
<!-- 2: lego/plugin center (3177,239) -->
<path d="M3167 248v-15h3v-4h5v4h4v-4h5v4h3.500v15z" fill="#e0e0e0"/>
<!-- 3: history clock center (3177,320) -->
<g fill="none" stroke="#e0e0e0" stroke-width="2.400">
 <path d="M3164.500 312a15.500 15.500 0 1 1 1 14"/><path d="M3177 308.500v12l6 5"/>
</g>
<path d="M3157 311.500l10 5.500 1.500-9.500z" fill="#e0e0e0"/>
<!-- 4: info center (3177,402) -->
<circle cx="3177" cy="402" r="15" fill="none" stroke="#e0e0e0" stroke-width="2.400"/><rect x="3175.400" y="399" width="3.200" height="11" fill="#e0e0e0"/><circle cx="3177" cy="394" r="2" fill="#e0e0e0"/>
<!-- 5: brush settings center (3177,486) -->
<g fill="#e0e0e0">
 <rect x="3158" y="468" width="4" height="4"/><rect x="3158" y="475" width="4" height="4"/><rect x="3158" y="482" width="4" height="4"/>
 <rect x="3164" y="469" width="8" height="2"/><rect x="3164" y="476" width="8" height="2"/><rect x="3164" y="483" width="8" height="2"/>
 <path d="M3198 473.500c1 .8 .5 2-1 3.500l-12 12.500-3-3 13-12c1.500-1.200 2-1.800 3-1z"/>
 <path d="M3180 488l3.500 3.500c0 4-3 7.500-7.500 8.500-3 .5-6 0-8.500-1 3-.8 4.500-2.500 5-5 .8-3.500 3.500-5.800 7.500-6z"/>
</g>
<!-- 6: brushes center (3177,540) -->
<g fill="#e0e0e0">
 <path d="M3156 530.500c3-3 9-5 13-2.500 2 1.500 2 4 0 5.500-3 2-8 2-10 .5-1-.8-1.500-2-3-3.500z"/><rect x="3171" y="530" width="26" height="3.500"/>
 <rect x="3160" y="545.500" width="19" height="3.500"/><path d="M3181 547.500l11-9c3 3 4.500 6 4.500 9s-1.500 6-4.500 9z"/>
</g>
<!-- 7: character center (3177,622) -->
<path d="M3163 634l11-27h3.500l11 27h-3.800l-3-7.500h-12.200l-3 7.500zM3170.800 623.500h9.800l-4.900-12.500z" fill="#e0e0e0"/><rect x="3189.500" y="605" width="2" height="33" fill="#e0e0e0"/>
<!-- 8: paragraph center (3177,678) -->
<path d="M3176 664h13v3h-2.500v27h-3v-27h-3v27h-3v-14c-6 0-10.500-3-10.500-8s4-8 9-8z" fill="#e0e0e0"/>
<!-- 9: play center (3177,759) -->
<path d="M3165 745.500v28l27-14z" fill="#e0e0e0"/>

<!-- Properties icon center (3256.6,185) -->
<g fill="none" stroke="#e0e0e0" stroke-width="2">
 <path d="M3241 172h4M3253 172h20M3241 182.500h17M3266 182.500h7M3241 193h7.500M3256.500 193h16.500"/>
 <circle cx="3249" cy="172" r="4"/><circle cx="3262" cy="182.500" r="4"/><circle cx="3252.500" cy="193" r="4"/>
</g>
<!-- Adjustments center (3256.6,241) -->
<circle cx="3256.600" cy="239" r="13.500" fill="none" stroke="#e0e0e0" stroke-width="2.400"/>
<path d="M3266.100 229.500a13.500 13.500 0 0 1-19 19z" fill="#e0e0e0"/>
<!-- Libraries center (3256.6,297) -->
<g fill="none" stroke="#e0e0e0" stroke-width="2">
 <rect x="3242.500" y="280" width="25" height="28"/><rect x="3247" y="284.500" width="25" height="28" fill="#535353"/>
</g>
<path d="M3259 285.500h8v13.500l-4-3.500-4 3.500z" fill="#e0e0e0"/>
<!-- Layers center (3256.6,353) -->
<path d="M3257 333.500l16.500 9.500-16.500 9.500-16.500-9.500z" fill="#e0e0e0"/>
<path d="M3244.500 351.500l12.500 7 12.500-7 4 2.500-16.500 9.500-16.500-9.500z" fill="#e0e0e0"/>
<!-- Paths center (3256.6,409) -->
<g fill="none" stroke="#e0e0e0" stroke-width="2">
 <path d="M3240 395.500h34"/><path d="M3244 416c0-12 5-20.500 13-20.500s13 8.500 13 20.500"/>
 <rect x="3240.500" y="413.500" width="7" height="7" fill="#535353"/><rect x="3266" y="413.500" width="7" height="7" fill="#535353"/>
</g>
<rect x="3236" y="391.500" width="8" height="8" fill="#e0e0e0"/><rect x="3270" y="391.500" width="8" height="8" fill="#e0e0e0"/><rect x="3253.500" y="392.500" width="6.500" height="6.500" fill="#e0e0e0"/>
<!-- Channels center (3256.6,465) -->
<circle cx="3256.600" cy="457" r="10" fill="#8e8e8e"/><circle cx="3249.500" cy="469.500" r="10" fill="#d6d6d6" opacity=".85"/><circle cx="3264" cy="469.500" r="10" fill="#b4b4b4" opacity=".8"/>
<path d="M3256.600 460c3 1.500 4.500 4.500 4 8-2.500 1.500-5.500 1.500-8 0-.5-3.500 1-6.500 4-8z" fill="#3c3c3c"/>
</svg>
<!-- ===== document canvas ===== -->
<div class="a" style="left:177px;top:252px;width:2065px;height:1678px;background:radial-gradient(ellipse 1500px 1300px at 1300px 800px,#efefee 0%,#ededec 55%,#eaeae9 100%)"></div>
<svg style="left:177px;top:252px" width="2065" height="1678" viewBox="177 252 2065 1678">
<defs>
<filter id="bl1" filterUnits="userSpaceOnUse" x="900" y="300" width="700" height="1600"><feGaussianBlur stdDeviation="1.2"/></filter>
<filter id="bl2" filterUnits="userSpaceOnUse" x="900" y="300" width="700" height="1600"><feGaussianBlur stdDeviation="2.2"/></filter>
<filter id="bl4" filterUnits="userSpaceOnUse" x="900" y="300" width="700" height="1600"><feGaussianBlur stdDeviation="4"/></filter>
<filter id="bl8" filterUnits="userSpaceOnUse" x="900" y="300" width="700" height="1600"><feGaussianBlur stdDeviation="8"/></filter>
<filter id="bl20" filterUnits="userSpaceOnUse" x="900" y="300" width="700" height="1600"><feGaussianBlur stdDeviation="20"/></filter>
<linearGradient id="gLoz" x1="0" y1="0.1" x2="1" y2="0.35">
 <stop offset="0" stop-color="#caa04c"/><stop offset="0.1" stop-color="#f0d999"/><stop offset="0.4" stop-color="#f7e7b8"/><stop offset="0.72" stop-color="#ecd08a"/><stop offset="0.9" stop-color="#d9b464"/><stop offset="1" stop-color="#c29640"/>
</linearGradient>
<linearGradient id="gLozL" x1="0" y1="0.2" x2="1" y2="0">
 <stop offset="0" stop-color="#c79c46"/><stop offset="0.14" stop-color="#ecd391"/><stop offset="0.5" stop-color="#f6e5b4"/><stop offset="0.82" stop-color="#e6c67c"/><stop offset="1" stop-color="#b4883a"/>
</linearGradient>
<radialGradient id="gBall" cx="0.32" cy="0.22" r="0.85">
 <stop offset="0" stop-color="#efd48c"/><stop offset="0.3" stop-color="#cfa23c"/><stop offset="0.62" stop-color="#a87a1c"/><stop offset="0.85" stop-color="#c99c3c"/><stop offset="1" stop-color="#e3c070"/>
</radialGradient>
<linearGradient id="gDisc" x1="0" y1="0" x2="1" y2="0.4">
 <stop offset="0" stop-color="#f2dca2"/><stop offset="0.45" stop-color="#ebcf8a"/><stop offset="1" stop-color="#d6ae5a"/>
</linearGradient>
<linearGradient id="gPost" x1="0" y1="0" x2="0" y2="1">
 <stop offset="0" stop-color="#d2aa56"/><stop offset="0.35" stop-color="#f5e4b0"/><stop offset="0.7" stop-color="#dfb964"/><stop offset="1" stop-color="#b98c38"/>
</linearGradient>
<linearGradient id="fadeT" x1="0" y1="0" x2="0" y2="1"><stop offset="0" stop-color="#000"/><stop offset="0.3" stop-color="#fff"/></linearGradient>
<mask id="mLozL" maskUnits="userSpaceOnUse" x="1030" y="720" width="220" height="290"><rect x="1030" y="740" width="220" height="270" fill="url(#fadeT)"/></mask>
<linearGradient id="fadeB" x1="0" y1="0" x2="0" y2="1"><stop offset="0.72" stop-color="#fff"/><stop offset="1" stop-color="#000"/></linearGradient>
<mask id="mLozR" maskUnits="userSpaceOnUse" x="1170" y="820" width="210" height="300"><rect x="1170" y="820" width="210" height="290" fill="url(#fadeB)"/></mask>
<!-- link centerlines -->
<path id="L1" d="M1196 500C1126 556 1086 650 1086 742C1086 850 1128 950 1204 952C1280 950 1321 850 1321 742C1321 650 1284 556 1196 500Z"/>
<ellipse id="L2" cx="1204" cy="1088" rx="120" ry="227"/>
<path id="L3" d="M1208 1213C1134 1213 1083 1326 1083 1454C1083 1570 1140 1668 1210 1680C1276 1668 1331 1560 1331 1438C1331 1326 1280 1213 1208 1213Z"/>
<path id="S1" fill-rule="evenodd" d="M1190 463C1236 460 1300 520 1335 620C1350 660 1356 700 1356 745C1356 880 1290 990 1204 990C1118 990 1050 880 1050 745C1050 640 1112 498 1190 463ZM1187 550C1240 600 1286 670 1286 745C1286 850 1250 918 1204 918C1158 918 1120 850 1120 745C1120 670 1150 600 1187 550Z"/>
<mask id="mk1" maskUnits="userSpaceOnUse" x="1000" y="400" width="420" height="640"><use href="#S1" fill="#fff"/></mask>
<mask id="mk2" maskUnits="userSpaceOnUse" x="1000" y="780" width="420" height="640"><use href="#L2" fill="none" stroke="#fff" stroke-width="72"/></mask>
<path id="S3" fill-rule="evenodd" d="M1210 1176C1290 1176 1362 1296 1362 1440C1362 1590 1302 1722 1216 1722C1126 1722 1046 1600 1046 1456C1046 1296 1120 1176 1210 1176ZM1210 1250C1262 1250 1298 1336 1300 1436C1300 1530 1252 1600 1204 1637C1160 1600 1120 1540 1120 1452C1120 1336 1160 1250 1210 1250Z"/>
<mask id="mk3" maskUnits="userSpaceOnUse" x="1000" y="1140" width="420" height="640"><use href="#S3" fill="#fff"/></mask>
</defs>

<!-- soft shadows -->
<g filter="url(#bl20)" opacity="0.55">
 <use href="#S1" fill="#b6b6b3" transform="translate(28 24)"/>
 <use href="#L2" fill="none" stroke="#b6b6b3" stroke-width="64" transform="translate(28 24)"/>
 <use href="#S3" fill="#b0b0ad" transform="translate(28 30)"/>
 <ellipse cx="1400" cy="565" rx="70" ry="95" fill="#b6b6b3"/>
</g>

<!-- stud post + butterfly back -->
<g>
 <!-- disc -->
 <ellipse cx="1350" cy="515" rx="51" ry="95" transform="rotate(8 1350 515)" fill="url(#gDisc)"/>
 <ellipse cx="1350" cy="515" rx="50" ry="94" transform="rotate(8 1350 515)" fill="none" stroke="#c9a14a" stroke-width="2.500" filter="url(#bl1)"/>
 <path d="M1322 560C1340 592 1376 590 1398 556C1398 586 1386 604 1364 609C1344 607 1328 590 1322 560Z" fill="#c99f46" filter="url(#bl4)"/>
 <path d="M1308 476C1316 444 1338 426 1364 424" stroke="#faf0d0" stroke-width="9" fill="none" filter="url(#bl4)"/>
 <!-- top loop -->
 <ellipse cx="1408" cy="455" rx="32" ry="43" fill="#e3c374"/>
 <ellipse cx="1408" cy="455" rx="30.500" ry="41.500" fill="none" stroke="#f3dfa6" stroke-width="3" filter="url(#bl1)"/>
 <ellipse cx="1407" cy="456" rx="24" ry="35" fill="#c39840"/>
 <path d="M1404 424C1420 428 1428 444 1427 462C1426 476 1420 486 1410 490" stroke="#e3c476" stroke-width="5" fill="none" filter="url(#bl1)"/>
 <path d="M1398 426C1410 432 1417 446 1416 462C1415 476 1410 484 1402 488" stroke="#dcb860" stroke-width="4" fill="none" filter="url(#bl1)"/>
 <path d="M1381 432C1390 420 1402 440 1402 458C1402 474 1394 486 1386 484C1378 470 1377 448 1381 432Z" fill="#ebebea"/>
 <!-- bottom loop -->
 <ellipse cx="1415" cy="565" rx="31" ry="39" fill="#e0bf6e"/>
 <ellipse cx="1415" cy="565" rx="29.500" ry="37.500" fill="none" stroke="#f1dc9e" stroke-width="3" filter="url(#bl1)"/>
 <ellipse cx="1415" cy="565" rx="23" ry="31" fill="#be933c"/>
 <path d="M1412 538C1428 542 1434 556 1433 570C1432 582 1426 592 1416 596" stroke="#dfc070" stroke-width="5" fill="none" filter="url(#bl1)"/>
 <path d="M1404 540C1418 546 1423 558 1422 570C1421 582 1416 590 1408 594" stroke="#d8b45c" stroke-width="4" fill="none" filter="url(#bl1)"/>
 <path d="M1389 574C1394 564 1404 568 1407 580C1408 592 1400 600 1392 597C1387 590 1387 580 1389 574Z" fill="#e4e4e2"/>
 <!-- post -->
 <rect x="1262" y="501" width="88" height="20" rx="3" fill="url(#gPost)"/>
 <rect x="1394" y="499" width="82" height="22" rx="10" fill="url(#gPost)"/>
 <path d="M1452 503v14" stroke="#c49a44" stroke-width="2"/>
 <ellipse cx="1362" cy="511" rx="26" ry="17" fill="#d0a548" filter="url(#bl2)"/>
 <path d="M1334 510C1350 504 1366 522 1394 512" stroke="#5e3f08" stroke-width="5" fill="none" filter="url(#bl1)"/>
 <path d="M1340 498C1350 490 1362 492 1370 502M1342 528C1354 536 1368 534 1378 524" stroke="#f3dc9a" stroke-width="4" fill="none" filter="url(#bl1)"/>
 <path d="M1376 470l6 10M1384 466l5 10M1380 548l5-8" stroke="#d2aa52" stroke-width="2" fill="none"/>
</g>

<!-- link 3 -->
<g fill="none" stroke-linejoin="round" mask="url(#mk3)">
 <rect x="1000" y="1140" width="420" height="640" fill="#b88930"/>
 <use href="#L3" stroke="#d5a950" stroke-width="70" filter="url(#bl4)"/>
 <use href="#L3" stroke="#e5c274" stroke-width="50" filter="url(#bl4)"/>
 <path d="M1075 1300C1056 1400 1064 1520 1112 1610" stroke="#f9ecc6" stroke-width="16" filter="url(#bl4)"/>
 <path d="M1100 1380C1100 1480 1130 1570 1180 1640" stroke="#f6e4b0" stroke-width="30" filter="url(#bl8)"/>
 <path d="M1345 1320C1356 1420 1347 1520 1300 1612" stroke="#f6e6b6" stroke-width="14" filter="url(#bl4)"/>
 <path d="M1296 1330C1304 1400 1300 1480 1270 1560" stroke="#f1dca0" stroke-width="10" filter="url(#bl4)"/>
 <path d="M1316 1380C1324 1450 1314 1530 1284 1596" stroke="#84601a" stroke-width="11" filter="url(#bl4)" opacity="0.9"/>
 <path d="M1120 1322C1110 1350 1108 1380 1112 1412" stroke="#8a6212" stroke-width="13" filter="url(#bl2)" opacity="0.85"/>
 <path d="M1118 1626C1150 1668 1182 1678 1206 1668" stroke="#7a5814" stroke-width="9" filter="url(#bl4)" opacity="0.8"/>
 <path d="M1206 1646C1230 1640 1262 1610 1280 1570" stroke="#f3dfa6" stroke-width="14" filter="url(#bl4)"/>
 <ellipse cx="1248" cy="1634" rx="17" ry="16" fill="#fdf6e0" stroke="none" filter="url(#bl4)"/>
</g>

<!-- link 2 -->
<g fill="none" mask="url(#mk2)">
 <use href="#L2" stroke="#b3842c" stroke-width="72"/>
 <use href="#L2" stroke="#d5a950" stroke-width="66" filter="url(#bl2)"/>
 <use href="#L2" stroke="#e5c274" stroke-width="48" filter="url(#bl4)"/>
 <path d="M1076 960C1057 1050 1064 1150 1108 1236" stroke="#f9ecc6" stroke-width="16" filter="url(#bl4)"/>
 <path d="M1098 1030C1100 1120 1130 1210 1178 1284" stroke="#f6e4b0" stroke-width="30" filter="url(#bl8)"/>
 <path d="M1344 970C1356 1060 1348 1150 1316 1232" stroke="#f6e6b6" stroke-width="14" filter="url(#bl4)"/>
 <path d="M1296 990C1304 1060 1300 1130 1276 1200" stroke="#f1dca0" stroke-width="10" filter="url(#bl4)"/>
 <path d="M1312 1010C1324 1080 1318 1150 1298 1204" stroke="#84601a" stroke-width="11" filter="url(#bl4)" opacity="0.9"/>
 <path d="M1118 973C1108 1000 1106 1030 1110 1062" stroke="#8a6212" stroke-width="13" filter="url(#bl2)" opacity="0.85"/>
</g>

<!-- link 1 -->
<g fill="none" stroke-linejoin="round" mask="url(#mk1)">
 <rect x="1000" y="400" width="420" height="640" fill="#b88930"/>
 <use href="#L1" stroke="#d5a950" stroke-width="70" filter="url(#bl4)"/>
 <use href="#L1" stroke="#e5c274" stroke-width="50" filter="url(#bl4)"/>
 <path d="M1152 516C1096 586 1064 680 1068 770C1070 830 1085 884 1112 926" stroke="#f9ecc6" stroke-width="16" filter="url(#bl4)"/>
 <path d="M1100 700C1100 790 1130 870 1178 940" stroke="#f6e4b0" stroke-width="30" filter="url(#bl8)"/>
 <path d="M1140 566C1130 606 1125 650 1128 684" stroke="#5c400a" stroke-width="8" filter="url(#bl2)" opacity="0.9"/>
 <path d="M1160 560C1150 600 1144 640 1146 676" stroke="#efd794" stroke-width="8" filter="url(#bl2)"/>
 <path d="M1342 650C1354 730 1346 810 1320 880" stroke="#f6e6b6" stroke-width="14" filter="url(#bl4)"/>
 <path d="M1282 630C1304 690 1312 750 1304 800" stroke="#80601c" stroke-width="9" filter="url(#bl4)" opacity="0.7"/>
</g>
<!-- link1 top right lozenge (front) -->
<mask id="mTop" maskUnits="userSpaceOnUse" x="1170" y="450" width="220" height="330"><rect x="1170" y="450" width="220" height="320" fill="url(#fadeB)"/></mask>
<g mask="url(#mTop)">
<path d="M1184 482C1192 464 1234 464 1258 488C1306 530 1346 620 1357 770L1288 770C1286 690 1262 590 1226 540C1208 520 1186 508 1184 482Z" fill="#ebd08c" filter="url(#bl1)"/>
<path d="M1192 490C1204 478 1228 484 1246 506C1278 548 1302 616 1312 700C1282 630 1244 566 1210 532C1196 518 1188 504 1192 490Z" fill="#fbf1d0" filter="url(#bl4)"/>
<path d="M1262 492C1308 536 1342 620 1352 720" stroke="#caa24e" stroke-width="5" fill="none" filter="url(#bl2)"/>
<path d="M1186 492C1192 515 1212 530 1232 556C1262 600 1282 680 1288 760" stroke="#b88c36" stroke-width="3" fill="none" filter="url(#bl1)"/>
</g>

<!-- junctions -->
<g id="J">
 <ellipse cx="1205" cy="917" rx="59" ry="92" fill="url(#gBall)"/><ellipse cx="1205" cy="917" rx="58" ry="91" fill="none" stroke="#b88c36" stroke-width="2" filter="url(#bl1)"/>
 <path d="M1158 884C1168 852 1198 836 1226 840" stroke="#f4e0a6" stroke-width="7" fill="none" filter="url(#bl4)"/>
 <path d="M1180 880C1196 930 1228 962 1256 990" stroke="#5e3f08" stroke-width="18" fill="none" filter="url(#bl4)" opacity="0.85"/>
 <ellipse cx="1210" cy="918" rx="7" ry="4" transform="rotate(25 1210 918)" fill="#e8d29a" filter="url(#bl1)"/>
 <path d="M1166 990C1186 1004 1224 1004 1248 986" stroke="#ecd08a" stroke-width="6" fill="none" filter="url(#bl2)"/>
 <!-- upper link left lozenge -->
 <g mask="url(#mLozL)">
  <path d="M1050 740C1046 830 1074 915 1118 962C1150 992 1195 1002 1219 988C1223 975 1219 962 1211 950C1178 912 1146 840 1124 740Z" fill="url(#gLozL)"/>
  <path d="M1082 780C1088 850 1118 916 1160 962" stroke="#fbf2d4" stroke-width="26" fill="none" filter="url(#bl8)"/>
  <path d="M1124 760C1142 840 1176 910 1210 950" stroke="#b98d38" stroke-width="3" fill="none" filter="url(#bl1)"/>
  <path d="M1126 934C1136 950 1150 962 1166 967C1176 969 1186 968 1190 964C1178 960 1150 952 1126 934Z" fill="#3a2a04" filter="url(#bl1)" opacity="0.92"/><path d="M1120 940C1140 966 1168 980 1200 976" stroke="#f3dfa4" stroke-width="5" fill="none" filter="url(#bl2)"/>
 </g>
 <!-- lower link right lozenge -->
 <g mask="url(#mLozR)">
  <path d="M1191 862C1187 846 1200 833 1222 833C1262 837 1302 876 1330 930C1350 972 1360 1030 1360 1110L1292 1110C1290 1050 1272 992 1250 965C1225 935 1199 900 1191 862Z" fill="url(#gLoz)"/>
  <path d="M1220 862C1252 884 1292 944 1314 1020" stroke="#fcf4d8" stroke-width="30" fill="none" filter="url(#bl8)"/>
  <path d="M1193 866C1202 905 1232 944 1256 972" stroke="#b98d38" stroke-width="3" fill="none" filter="url(#bl1)"/>
 </g>
 <circle cx="1203" cy="848" r="2.500" fill="#5a3e08"/>
</g>
<use href="#J" transform="translate(2 349)"/>
<!-- top-layer dark reflections -->
<g fill="none" stroke-linecap="round">
<path d="M1287 628C1303 652 1313 690 1315 722" stroke="#3d2c06" stroke-width="9" filter="url(#bl2)" opacity="0.85"/>
<path d="M1298 1010C1318 1044 1327 1082 1323 1124" stroke="#3d2c06" stroke-width="10" filter="url(#bl2)" opacity="0.85"/>
<path d="M1302 1362C1322 1400 1328 1450 1320 1500C1314 1540 1300 1590 1288 1620" stroke="#3d2c06" stroke-width="8" filter="url(#bl2)" opacity="0.8"/>
</g>
</svg>
<!-- ===== PixelAdmin panel components ===== -->
<!-- logo -->
<div class="t" id="logo" style="left:2346.5px;top:214px;font-size:61px;line-height:73px;color:#f3f3f3;letter-spacing:-1px;-webkit-text-stroke:1.5px #f3f3f3;transform:scaleX(1.004)">PixelAdmin</div>
<div class="t" style="left:2634px;top:220px;font-size:20px;line-height:24px;color:#f3f3f3">®</div>
<!-- header pending badge -->
<div class="a" style="left:3008px;top:487px;width:102px;height:33px;border-radius:7px;background:#e8861a"></div>
<!-- card 1 -->
<div class="a" style="left:2359px;top:623px;width:718px;height:252px;border-radius:11px;background:#5c5c5c;border:2px solid #494949"></div>
<div class="a" style="left:2385.500px;top:665.500px;width:77px;height:77px;border-radius:6px;background:#ededec;box-shadow:0 0 0 1.500px #474747"></div>
<svg style="left:2385.500px;top:665.500px" width="77" height="77" viewBox="0 0 77 77"><g fill="none" stroke="#c79c3c" stroke-width="2.300"><ellipse cx="40.500" cy="26.500" rx="4.800" ry="8.500" transform="rotate(6 40.500 26.500)"/><ellipse cx="40.500" cy="41" rx="4.800" ry="8.500"/><ellipse cx="41" cy="55.500" rx="4.800" ry="8.500" transform="rotate(-4 41 55.500)"/></g><g fill="none" stroke="#ecd28e" stroke-width="1"><ellipse cx="39.800" cy="26.500" rx="4.800" ry="8.500" transform="rotate(6 40.500 26.500)"/><ellipse cx="39.800" cy="41" rx="4.800" ry="8.500"/><ellipse cx="40.300" cy="55.500" rx="4.800" ry="8.500"/></g><path d="M44 18.500h7.500" stroke="#c79c3c" stroke-width="1.500"/><ellipse cx="47.500" cy="18" rx="2" ry="3.500" fill="#d6b15c"/></svg>
<div class="a" style="left:2385px;top:760px;width:667px;height:2px;background:#484848"></div>
<div class="a" style="left:2385px;top:786px;width:667px;height:63px;border-radius:6px;background:#fdfdfd;border:2px solid #d2d2d2"></div>
<!-- card 2: Actions header -->
<div class="a" style="left:2359px;top:900px;width:718px;height:72px;border-radius:9px;background:#5c5c5c;border:2px solid #494949"></div>
<svg style="left:2378px;top:924px" width="24" height="30" viewBox="0 0 24 30"><path d="M15 0L3 17h7.5L7 30 21 11h-8z" fill="#f5a623"/><path d="M15 0L3 17h4L16 3z" fill="#ffd36b"/></svg>
<div class="a" style="left:2498px;top:922px;width:102px;height:27px;border-radius:14px;background:#434343"></div>
<!-- left guide line (actions) -->
<div class="a" style="left:2366px;top:979px;width:4px;height:386px;border-radius:2px;background:#474747"></div>
<!-- action rows -->
<div class="a" style="left:2986px;top:1023px;width:75px;height:47px;border-radius:6px;background:#fdfdfd;border:2px solid #d2d2d2"></div>
<div class="a" style="left:2385px;top:1099px;width:676px;height:2px;background:#484848"></div>
<div class="a" style="left:2986px;top:1128px;width:75px;height:47px;border-radius:6px;background:#fdfdfd;border:2px solid #d2d2d2"></div>
<div class="a" style="left:2385px;top:1203px;width:676px;height:2px;background:#484848"></div>
<div class="a" style="left:2864px;top:1225px;width:197px;height:47px;border-radius:6px;background:#fdfdfd;border:2px solid #d2d2d2"></div>
<!-- All Actions -->
<div class="a" style="left:2387px;top:1290px;width:674px;height:59px;border-radius:7px;background:#5c5c5c;border:2px solid #494949"></div>
<svg style="left:3034px;top:1313px" width="8" height="14"><path d="M0 0L8 7L0 14Z" fill="#f0f0f0"/></svg>
<!-- Job card -->
<div class="a" style="left:2359px;top:1391px;width:718px;height:61px;border-radius:9px;background:#5c5c5c;border:2px solid #494949"></div>
<svg style="left:3051px;top:1416px" width="8" height="14"><path d="M0 0L8 7L0 14Z" fill="#f0f0f0"/></svg>
<!-- Shot Instructions card -->
<div class="a" style="left:2359px;top:1479px;width:718px;height:61px;border-radius:9px;background:#5c5c5c;border:2px solid #494949"></div>
<svg style="left:3045px;top:1507px" width="14" height="8"><path d="M0 0H14L7 8Z" fill="#f0f0f0"/></svg>
<div class="a" style="left:2366px;top:1550px;width:4px;height:363px;border-radius:2px;background:#474747"></div>
<!-- inner shot box -->
<div class="a" style="left:2387px;top:1566px;width:674px;height:315px;border-radius:7px;background:#5c5c5c;border:2px solid #494949"></div>
<div class="a" style="left:2936px;top:1721px;width:88px;height:27px;border-radius:6px;background:#e8861a"></div>
<div class="a" style="left:2936px;top:1771px;width:88px;height:27px;border-radius:6px;background:#e8861a"></div>
<div class="a" style="left:2936px;top:1822px;width:88px;height:27px;border-radius:6px;background:#e8861a"></div>
<!-- footer -->
<div class="a" style="left:2354px;top:1955px;width:13px;height:13px;border-radius:50%;background:#2fa47b"></div>
<!-- back arrow -->
<svg style="left:2382px;top:436px" width="20" height="20" viewBox="0 0 20 20"><path d="M18 10H2.5M9 3L2 10l7 7" stroke="#f0f0f0" stroke-width="2" fill="none"/></svg>
<!-- panel tab menu icon, >> markers -->
<svg style="left:3104px;top:157px" width="21" height="15"><path d="M0 1h21M0 5.3h21M0 9.6h21M0 14h21" stroke="#c8c8c8" stroke-width="1.6"/></svg>
<svg style="left:3107px;top:119px" width="14" height="10" viewBox="0 0 14 10"><path d="M1 1l4 4-4 4M8 1l4 4-4 4" stroke="#d0d0d0" stroke-width="1.5" fill="none"/></svg>
<svg style="left:3189px;top:119px" width="14" height="10" viewBox="0 0 14 10"><path d="M5 1L1 5l4 4M12 1L8 5l4 4" stroke="#d0d0d0" stroke-width="1.5" fill="none"/></svg>
<svg style="left:3429px;top:119px" width="14" height="10" viewBox="0 0 14 10"><path d="M5 1L1 5l4 4M12 1L8 5l4 4" stroke="#d0d0d0" stroke-width="1.5" fill="none"/></svg>
<svg style="left:11px;top:119px" width="14" height="10" viewBox="0 0 14 10"><path d="M1 1l4 4-4 4M8 1l4 4-4 4" stroke="#d0d0d0" stroke-width="1.5" fill="none"/></svg>
<!-- ===== text ===== -->
<div id="t0" class="t" style="left:1585.0px;top:8.5px;font-size:26px;line-height:31px;color:#e2e2e2;-webkit-text-stroke:0.3px #e2e2e2;transform:scaleX(1.0449)">Adobe Photoshop 2025</div>
<div id="t1" class="t" style="left:256.0px;top:65.7px;font-size:21px;line-height:25px;color:#e8e8e8;-webkit-text-stroke:0.3px #e8e8e8;transform:scaleX(1.0576)">Auto-Select:</div>
<div id="t2" class="t" style="left:406.0px;top:65.7px;font-size:21px;line-height:25px;color:#e8e8e8;-webkit-text-stroke:0.3px #e8e8e8;transform:scaleX(0.9709)">Layer</div>
<div id="t3" class="t" style="left:553.0px;top:65.7px;font-size:21px;line-height:25px;color:#e8e8e8;-webkit-text-stroke:0.3px #e8e8e8;transform:scaleX(1.0257)">Show Transform Controls</div>
<div id="t4" class="t b" style="left:3077.5px;top:64.0px;font-size:22px;line-height:26px;color:#ffffff;transform:scaleX(0.8813)">Share</div>
<div id="t5" class="t b" style="left:132.5px;top:126.8px;font-size:23px;line-height:28px;color:#f2f2f2;transform:scaleX(1.0433)">ER-1134_Chain-Link Earring.psd @ 202% (Layer 0, RGB/8#) *</div>
<div id="t6" class="t" style="left:95.0px;top:1976.4px;font-size:23px;line-height:28px;color:#ffffff;-webkit-text-stroke:0.3px #ffffff;transform:scaleX(1.0681)">201,58%</div>
<div id="t7" class="t" style="left:267.6px;top:1977.0px;font-size:21px;line-height:25px;color:#d8d8d8;-webkit-text-stroke:0.3px #d8d8d8;transform:scaleX(1.0160)">Untagged RGB (8bpc)</div>
<div id="t8" class="t b" style="left:2352.5px;top:151.2px;font-size:21px;line-height:25px;color:#f0f0f0;-webkit-text-stroke:0.3px #f0f0f0;transform:scaleX(1.0033)">PixelAdmin Refine</div>
<div id="t9" class="t" style="left:3016.0px;top:233.9px;font-size:24px;line-height:29px;color:#f4f4f4;-webkit-text-stroke:0.55px #f4f4f4;transform:scaleX(0.8952)">Sign Out</div>
<div id="t10" class="t" style="left:2374.6px;top:329.6px;font-size:26.5px;line-height:32px;color:#f6f6f6;-webkit-text-stroke:0.55px #f6f6f6;transform:scaleX(0.9441)">Dashboard</div>
<div id="t11" class="t" style="left:2546.0px;top:329.6px;font-size:26.5px;line-height:32px;color:#f6f6f6;-webkit-text-stroke:0.55px #f6f6f6;transform:scaleX(0.9004)">Tasks</div>
<div id="t12" class="t" style="left:2656.0px;top:329.6px;font-size:26.5px;line-height:32px;color:#f6f6f6;-webkit-text-stroke:0.55px #f6f6f6;transform:scaleX(0.9723)">Actions</div>
<div id="t13" class="t" style="left:2790.0px;top:329.6px;font-size:26.5px;line-height:32px;color:#f6f6f6;-webkit-text-stroke:0.55px #f6f6f6;transform:scaleX(0.9294)">Settings</div>
<div id="t14" class="t" style="left:2408.0px;top:429.9px;font-size:26px;line-height:31px;color:#f4f4f4;-webkit-text-stroke:0.55px #f4f4f4;transform:scaleX(0.9316)">Back to Tasks</div>
<div id="t15" class="t b" style="left:2358.7px;top:491.8px;font-size:29px;line-height:35px;color:#ffffff;-webkit-text-stroke:0.3px #ffffff;transform:scaleX(0.8710)">ER-1134</div>
<div id="t16" class="t" style="left:2358.0px;top:536.2px;font-size:21px;line-height:25px;color:#dadada;-webkit-text-stroke:0.55px #dadada;transform:scaleX(0.9078)">Scandi Fashion ApS · AW2027</div>
<div id="t17" class="t b" style="left:3024.6px;top:492.6px;font-size:19px;line-height:23px;color:#ffffff;-webkit-text-stroke:0.3px #ffffff;transform:scaleX(0.9112)">Pending</div>
<div id="t18" class="t b" style="left:2464.0px;top:680.4px;font-size:22px;line-height:26px;color:#ffffff;-webkit-text-stroke:0.3px #ffffff;transform:scaleX(0.8716)">Chain-Link Earring.png</div>
<div id="t19" class="t" style="left:2464.0px;top:706.8px;font-size:18px;line-height:22px;color:#e2e2e2;-webkit-text-stroke:0.55px #e2e2e2;transform:scaleX(0.8903)">IMAGE · Currently open</div>
<div id="t20" class="t" style="left:2992.5px;top:692.9px;font-size:19px;line-height:23px;color:#3bab86;-webkit-text-stroke:0.55px #3bab86;transform:scaleX(0.9895)">Editing</div>
<div id="t21" class="t" style="left:2582.0px;top:803.5px;font-size:26px;line-height:31px;color:#111111;-webkit-text-stroke:0.55px #111111;transform:scaleX(0.9767)">Upload Completed Files</div>
<div id="t22" class="t b" style="left:2413.0px;top:925.7px;font-size:22px;line-height:26px;color:#ffffff;-webkit-text-stroke:0.3px #ffffff;transform:scaleX(0.9258)">Actions</div>
<div id="t23" class="t" style="left:2510.0px;top:926.4px;font-size:17px;line-height:20px;color:#ececec;-webkit-text-stroke:0.55px #ececec;transform:scaleX(0.9535)">2 matched</div>
<div id="t24" class="t b" style="left:2385.7px;top:1009.8px;font-size:21px;line-height:25px;color:#ffffff;-webkit-text-stroke:0.3px #ffffff;transform:scaleX(0.9068)">Background</div>
<div id="t25" class="t" style="left:2385.7px;top:1039.5px;font-size:17px;line-height:20px;color:#e2e2e2;-webkit-text-stroke:0.55px #e2e2e2;transform:scaleX(0.9498)">Often used</div>
<div id="t26" class="t i" style="left:2385.7px;top:1066.4px;font-size:17px;line-height:20px;color:#e2e2e2;-webkit-text-stroke:0.55px #e2e2e2;transform:scaleX(0.9247)">Applies to all tasks</div>
<div id="t27" class="t" style="left:3005.5px;top:1033.4px;font-size:22px;line-height:26px;color:#111111;-webkit-text-stroke:0.55px #111111;transform:scaleX(0.8796)">Run</div>
<div id="t28" class="t b" style="left:2385.7px;top:1113.6px;font-size:21px;line-height:25px;color:#ffffff;-webkit-text-stroke:0.3px #ffffff;transform:scaleX(0.9097)">Silver to gold</div>
<div id="t29" class="t" style="left:2385.7px;top:1143.9px;font-size:17px;line-height:20px;color:#e2e2e2;-webkit-text-stroke:0.55px #e2e2e2;transform:scaleX(0.9498)">Often used</div>
<div id="t30" class="t i" style="left:2385.7px;top:1170.4px;font-size:17px;line-height:20px;color:#e2e2e2;-webkit-text-stroke:0.55px #e2e2e2;transform:scaleX(0.9247)">Applies to all tasks</div>
<div id="t31" class="t" style="left:3005.5px;top:1138.4px;font-size:22px;line-height:26px;color:#111111;-webkit-text-stroke:0.55px #111111;transform:scaleX(0.8796)">Run</div>
<div id="t32" class="t" style="left:2883.0px;top:1235.8px;font-size:22px;line-height:26px;color:#111111;-webkit-text-stroke:0.55px #111111;transform:scaleX(0.9925)">Run All Matched</div>
<div id="t33" class="t b" style="left:2403.6px;top:1308.6px;font-size:19px;line-height:23px;color:#ffffff;-webkit-text-stroke:0.3px #ffffff;transform:scaleX(1.0149)">All Actions</div>
<div id="t34" class="t b" style="left:2375.8px;top:1410.0px;font-size:21px;line-height:25px;color:#ffffff;-webkit-text-stroke:0.3px #ffffff;transform:scaleX(1.0235)">Job: AW2027 (...)</div>
<div id="t35" class="t b" style="left:2375.8px;top:1498.2px;font-size:21px;line-height:25px;color:#ffffff;-webkit-text-stroke:0.3px #ffffff;transform:scaleX(0.9996)">Shot Instructions</div>
<div id="t36" class="t b" style="left:2408.0px;top:1589.8px;font-size:24.5px;line-height:29px;color:#ffffff;-webkit-text-stroke:0.3px #ffffff;transform:scaleX(0.9355)">45° vinkel</div>
<div id="t37" class="t" style="left:2520.6px;top:1594.1px;font-size:20px;line-height:24px;color:#dedede;-webkit-text-stroke:0.55px #dedede;transform:scaleX(0.8960)">— 45° vinkel</div>
<div id="t38" class="t b" style="left:2408.0px;top:1633.1px;font-size:20px;line-height:24px;color:#dadada;-webkit-text-stroke:0.3px #dadada;transform:scaleX(0.8962)">Filename</div>
<div id="t39" class="t" style="left:2548.0px;top:1635.1px;font-size:20px;line-height:24px;color:#f4f4f4;-webkit-text-stroke:0.55px #f4f4f4;transform:scaleX(0.8673)">Scandi Fashion ApS_AW2027_ER-1134__{sequence}</div>
<div id="t40" class="t b" style="left:2408.0px;top:1676.7px;font-size:20px;line-height:24px;color:#dadada;-webkit-text-stroke:0.3px #dadada;transform:scaleX(0.9336)">Export Formats</div>
<div id="t41" class="t b" style="left:2424.0px;top:1722.1px;font-size:20px;line-height:24px;color:#ffffff;-webkit-text-stroke:0.3px #ffffff;transform:scaleX(0.8588)">WEB JPG (Front / Back)</div>
<div id="t42" class="t b" style="left:2424.0px;top:1772.8px;font-size:20px;line-height:24px;color:#ffffff;-webkit-text-stroke:0.3px #ffffff;transform:scaleX(0.8574)">Full res w. PSD layers</div>
<div id="t43" class="t b" style="left:2424.0px;top:1823.6px;font-size:20px;line-height:24px;color:#ffffff;-webkit-text-stroke:0.3px #ffffff;transform:scaleX(0.8870)">PNG (Front / Back)</div>
<div id="t44" class="t b" style="left:2948.4px;top:1725.4px;font-size:17px;line-height:20px;color:#ffffff;-webkit-text-stroke:0.3px #ffffff;transform:scaleX(0.9111)">Pending</div>
<div id="t45" class="t b" style="left:2948.4px;top:1775.4px;font-size:17px;line-height:20px;color:#ffffff;-webkit-text-stroke:0.3px #ffffff;transform:scaleX(0.9111)">Pending</div>
<div id="t46" class="t b" style="left:2948.4px;top:1826.1px;font-size:17px;line-height:20px;color:#ffffff;-webkit-text-stroke:0.3px #ffffff;transform:scaleX(0.9111)">Pending</div>
<div id="t47" class="t b" style="left:2382.0px;top:1938.4px;font-size:22px;line-height:26px;color:#ffffff;-webkit-text-stroke:0.3px #ffffff;transform:scaleX(0.8552)">ER-1134 (45° vinkel)</div>
<div id="t48" class="t" style="left:2382.0px;top:1965.1px;font-size:18px;line-height:22px;color:#e4e4e4;-webkit-text-stroke:0.55px #e4e4e4;transform:scaleX(0.8669)">Scandi Fashion ApS · AW2027</div>
<div id="t49" class="t" style="left:2946.0px;top:1950.8px;font-size:18px;line-height:22px;color:#e8e8e8;-webkit-text-stroke:0.55px #e8e8e8;transform:scaleX(1.0145)">09:49</div>
<div id="t50" class="t" style="left:3032.5px;top:1945.3px;font-size:28px;line-height:34px;color:#ffffff;-webkit-text-stroke:0.55px #ffffff;transform:scaleX(0.9221)">View</div>
<div id="t51" class="t b" style="left:3294.8px;top:172.1px;font-size:21.5px;line-height:26px;color:#f2f2f2;transform:scaleX(0.9788)">Properties</div>
<div id="t52" class="t b" style="left:3294.8px;top:228.1px;font-size:21.5px;line-height:26px;color:#f2f2f2;transform:scaleX(0.9914)">Adjustments</div>
<div id="t53" class="t b" style="left:3294.8px;top:284.1px;font-size:21.5px;line-height:26px;color:#f2f2f2;transform:scaleX(0.9810)">Libraries</div>
<div id="t54" class="t b" style="left:3294.8px;top:340.1px;font-size:21.5px;line-height:26px;color:#f2f2f2;transform:scaleX(0.9402)">Layers</div>
<div id="t55" class="t b" style="left:3294.8px;top:396.1px;font-size:21.5px;line-height:26px;color:#f2f2f2;transform:scaleX(0.9323)">Paths</div>
<div id="t56" class="t b" style="left:3294.8px;top:452.1px;font-size:21.5px;line-height:26px;color:#f2f2f2;transform:scaleX(0.9620)">Channels</div>
</body></html>
